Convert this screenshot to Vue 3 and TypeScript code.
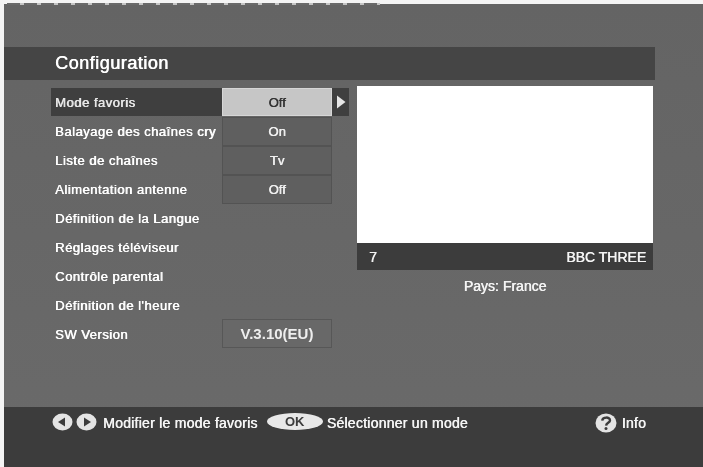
<script setup lang="ts">
interface Row { label: string; value?: string; active?: boolean; wide?: boolean }
const rows: Row[] = [
  { label: 'Mode favoris', value: 'Off', active: true },
  { label: 'Balayage des chaînes cry', value: 'On' },
  { label: 'Liste de chaînes', value: 'Tv' },
  { label: 'Alimentation antenne', value: 'Off' },
  { label: 'Définition de la Langue' },
  { label: 'Réglages téléviseur' },
  { label: 'Contrôle parental' },
  { label: 'Définition de l\'heure' },
  { label: 'SW Version', value: 'V.3.10(EU)', wide: true },
]
</script>

<template>
  <div class="page">
    <div class="dashes"></div>
    <div class="screen">
      <div class="top-space"></div>
      <header class="title-bar"><h1>Configuration</h1></header>
      <main class="main">
        <div class="menu">
          <div v-for="row in rows" :key="row.label" class="row" :class="{ active: row.active }">
            <span class="label">{{ row.label }}</span>
            <span v-if="row.value" class="value" :class="{ wide: row.wide }"><span class="value-text">{{ row.value }}</span></span>
            <span v-if="row.active" class="arrow">
              <svg width="10" height="14" viewBox="0 0 10 14"><path d="M1 0.5 L9.5 7 L1 13.5 Z" fill="#e6e6e6" /></svg>
            </span>
          </div>
        </div>
        <section class="preview">
          <div class="video"></div>
          <div class="channel"><span class="num">7</span><span class="name">BBC THREE</span></div>
          <div class="country">Pays: France</div>
        </section>
      </main>
      <footer class="footer">
        <svg class="ico" width="21" height="18" viewBox="0 0 21 18"><ellipse cx="10.5" cy="9" rx="10" ry="8.5" fill="#e4e4e4" /><path d="M13 4.5 L6 9 L13 13.5 Z" fill="#3c3c3c" /></svg>
        <svg class="ico second" width="21" height="18" viewBox="0 0 21 18"><ellipse cx="10.5" cy="9" rx="10" ry="8.5" fill="#e4e4e4" /><path d="M8 4.5 L15 9 L8 13.5 Z" fill="#3c3c3c" /></svg>
        <span class="hint first">Modifier le mode favoris</span>
        <span class="ok">OK</span>
        <span class="hint">Sélectionner un mode</span>
        <span class="spacer"></span>
        <svg class="ico" width="22" height="20" viewBox="0 0 22 20"><ellipse cx="11" cy="10" rx="10.5" ry="9.5" fill="#e4e4e4" /><path d="M7.2 7.6 C7.6 3.6 15 3.6 15 7.4 C15 9.8 11.2 9.8 11.1 12.6" fill="none" stroke="#3c3c3c" stroke-width="2.4" /><circle cx="11" cy="15.6" r="1.5" fill="#3c3c3c" /></svg>
        <span class="hint info">Info</span>
      </footer>
    </div>
  </div>
</template>

<style>
html, body { margin: 0; background: #fff; }
</style>

<style scoped>
.page {
  position: relative;
  width: 703px;
  height: 467px;
  box-sizing: border-box;
  padding: 4px 0 0 4px;
  background: #f4f4f4;
  overflow: hidden;
  font-family: "Liberation Sans", Arial, sans-serif;
}
.dashes {
  position: absolute;
  left: 7px;
  top: 3px;
  width: 373px;
  height: 2px;
  background: repeating-linear-gradient(90deg, #6a6a6a 0 13px, #c4c4c4 13px 17px);
  filter: blur(0.7px);
}
.screen {
  display: flex;
  flex-direction: column;
  height: 463px;
  background: linear-gradient(180deg, #646464 0, #6a6a6a 100%);
}
.top-space { height: 43px; flex: none; }
.title-bar {
  flex: none;
  width: 651px;
  height: 33px;
  background: #454545;
  display: flex;
  align-items: center;
  box-sizing: border-box;
  padding-left: 51px;
}
h1 {
  margin: 0;
  font-size: 18px;
  font-weight: 400;
  letter-spacing: 0.5px;
  color: #fff;
  text-shadow: 0.6px 0 0 currentColor;
  filter: blur(0.6px);
}
.main {
  flex: 1;
  display: flex;
  padding: 6px 0 0 47px;
  gap: 8px;
  min-height: 0;
}
.menu { width: 298px; display: flex; flex-direction: column; padding-top: 2px; }
.row {
  display: flex;
  align-items: center;
  height: 28.9px;
  position: relative;
}
.row.active { background: #3f3f3f; height: 28px; margin-bottom: 1.5px; }
.label {
  width: 167px;
  flex: none;
  box-sizing: border-box;
  padding-left: 4px;
  white-space: nowrap;
  font-size: 13px;
  letter-spacing: 0.5px;
  color: #fff;
  text-shadow: 0.6px 0 0 currentColor;
  filter: blur(0.6px);
}
.value {
  width: 110px;
  height: 29px;
  flex: none;
  box-sizing: border-box;
  margin-left: 4px;
  display: flex;
  align-items: center;
  justify-content: center;
  background: #5f5f5f;
  border: 1px solid #535353;
  font-size: 13px;
  color: #f0f0f0;
}
.value-text {
  text-shadow: 0.5px 0 0 currentColor;
  filter: blur(0.6px);
}
.active .value {
  height: 28px;
  background: #c6c6c6;
  border-color: #d6d6d6;
  color: #333;
}
.active .label { color: #e8e8e8; }
.value.wide {
  margin-top: -2px;
  font-size: 15px;
  font-weight: 700;
  color: #eee;
  background: #686868;
  border-color: #575757;
}
.wide .value-text { text-shadow: none; }
.arrow { flex: 1; display: flex; justify-content: center; }
.arrow svg { filter: blur(0.5px); }
.preview { width: 296px; display: flex; flex-direction: column; }
.video { height: 157px; background: #fff; }
.channel {
  height: 26px;
  background: #3c3c3c;
  display: flex;
  justify-content: space-between;
  align-items: center;
  padding: 1px 7px 0 12px;
  font-size: 14px;
  color: #f4f4f4;
}
.num, .name { text-shadow: 0.5px 0 0 currentColor; filter: blur(0.6px); }
.country {
  margin-top: 8px;
  text-align: center;
  font-size: 14px;
  color: #f4f4f4;
  text-shadow: 0.5px 0 0 currentColor;
  filter: blur(0.6px);
}
.footer {
  flex: none;
  height: 60px;
  background: #3c3c3c;
  display: flex;
  align-items: flex-start;
  box-sizing: border-box;
  padding: 6px 57px 0 48px;
  color: #f4f4f4;
}
.ico { flex: none; filter: blur(0.6px); }
.ico.second { margin-left: 3px; }
.hint {
  font-size: 14px;
  line-height: 18px;
  margin: 1px 0 0 5px;
  letter-spacing: 0.25px;
  white-space: nowrap;
  text-shadow: 0.5px 0 0 currentColor;
  filter: blur(0.6px);
}
.hint.first { margin-left: 6px; }
.ok {
  width: 56px;
  height: 17px;
  margin: 0 0 0 9px;
  border-radius: 50%;
  background: #e8e8e8;
  color: #3c3c3c;
  font-size: 13px;
  font-weight: 700;
  line-height: 17px;
  text-align: center;
  filter: blur(0.6px);
}
.ok + .hint { margin-left: 4px; }
.spacer { flex: 1; }
</style>
